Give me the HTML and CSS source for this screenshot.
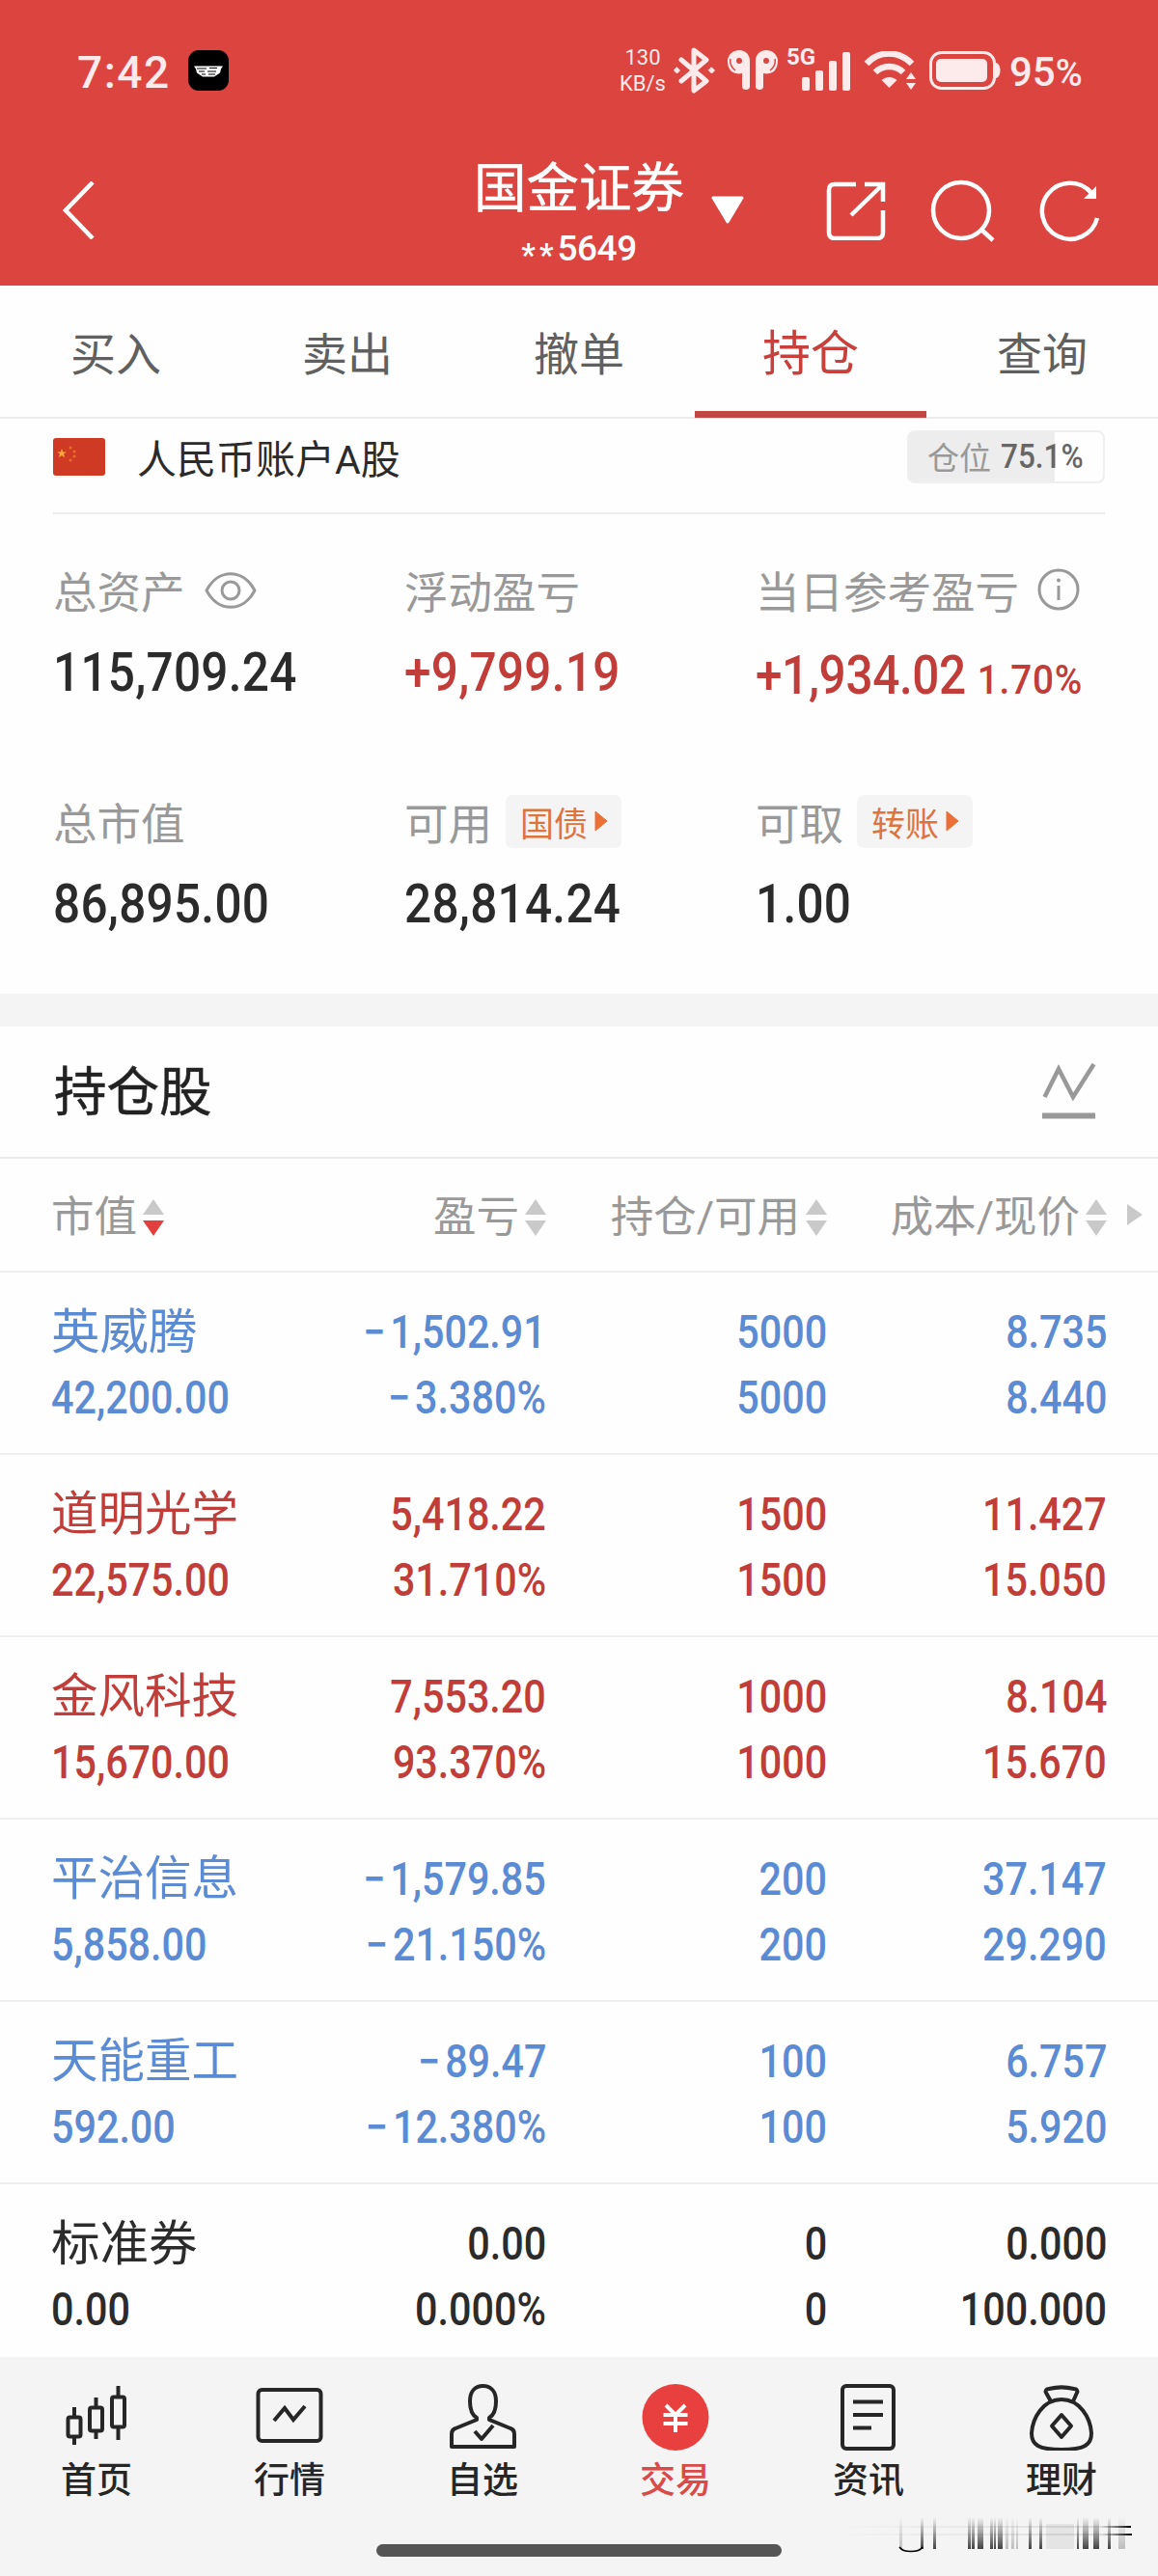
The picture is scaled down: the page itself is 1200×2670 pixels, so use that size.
FILE: index.html
```html
<!DOCTYPE html>
<html lang="zh-CN">
<head>
  <meta charset="UTF-8">
  <meta name="viewport" content="width=device-width, initial-scale=1.0">
  <title>国金证券 - 持仓</title>
  <link rel="stylesheet" href="styles.css">
</head>
<body>
  <header class="header">
    <div class="status-bar">
      <span class="time">7:42</span>
      <svg class="app-icon" width="42" height="42" viewBox="0 0 42 42">
        <rect width="42" height="42" rx="11" fill="#000"/>
        <path d="M6 16.500h30l-2 3-1 4-6 4h-12l-6-4-1-4z" fill="#fff"/>
        <path d="M9 19h10M22 18.500h8M11 22h6M20 22h9M14 25h4M21 25h7" stroke="#000" stroke-width="1.200"/>
      </svg>
      <div class="status-right">
        <div class="speed"><span>130</span><span>KB/s</span></div>
        <svg class="bluetooth" width="44" height="48" viewBox="0 0 44 48" fill="none" stroke="#fdeaea" stroke-width="5" stroke-linejoin="round" stroke-linecap="round">
          <path d="M8 13l26 22-13 10V3l13 10L8 35"/>
          <path d="M3.500 21l3 3-3 3-3-3zM39.500 21l3 3-3 3-3-3z" fill="#fdeaea" stroke-width="1"/>
        </svg>
        <svg class="buds" width="54" height="42" viewBox="0 0 54 42">
          <g fill="#fdeaea">
            <path d="M13 0c7 0 11 5 11 11v27c0 4-8 4-8 0V24c-4 1-8 0-11-2C1 18 1 13 1 10c1-6 6-10 12-10z"/>
            <path d="M41 0c-7 0-11 5-11 11v27c0 4 8 4 8 0V24c4 1 8 0 11-2 4-4 4-9 4-12-1-6-6-10-12-10z"/>
          </g>
          <g fill="none" stroke="#dc4440" stroke-width="1.500">
            <path d="M4 9c-1 5 1 9 5 12M50 9c1 5-1 9-5 12"/>
          </g>
          <circle cx="13" cy="11" r="3" fill="#dc4440"/>
          <circle cx="41" cy="11" r="3" fill="#dc4440"/>
        </svg>
        <div class="signal">
          <span class="net">5G</span>
          <svg width="66" height="44" viewBox="0 0 66 44" fill="#fdeaea">
            <rect x="16" y="29" width="8" height="14" rx="2"/>
            <rect x="30" y="22" width="8" height="21" rx="2"/>
            <rect x="44" y="12" width="8" height="31" rx="2"/>
            <rect x="58" y="3" width="8" height="40" rx="2"/>
          </svg>
        </div>
        <svg class="wifi" width="55" height="40" viewBox="0 0 55 40">
          <path d="M3 13C16-1 36-1 50 13M12 22c8-8 21-8 29 0" fill="none" stroke="#fdeaea" stroke-width="6.500"/>
          <path d="M26.500 38l-8-8c5-4 11-4 16 0z" fill="#fdeaea"/>
          <path d="M49 22l5 7H44zM49 40l5-7H44z" fill="#fdeaea"/>
        </svg>
        <svg class="battery" width="74" height="40" viewBox="0 0 74 40">
          <rect x="1.500" y="1.500" width="66" height="37" rx="11" fill="none" stroke="#fdeaea" stroke-width="3"/>
          <rect x="7" y="8" width="53" height="24" rx="5" fill="#fdeaea"/>
          <path d="M69 12c6 1 6 15 0 16z" fill="#fdeaea"/>
        </svg>
        <span class="percent">95<small>%</small></span>
      </div>
    </div>
    <div class="title-bar">
      <svg class="back" width="36" height="60" viewBox="0 0 36 60" fill="none" stroke="#fff" stroke-width="4.500">
        <path d="M32 1L4 30l28 29"/>
      </svg>
      <div class="account">
        <div class="broker">国金证券</div>
        <div class="account-no"><span class="mask">**</span>5649</div>
      </div>
      <svg class="drop" width="36" height="30" viewBox="0 0 36 30">
        <path d="M3 2h30L18 27z" fill="#fff" stroke="#fff" stroke-width="3" stroke-linejoin="round"/>
      </svg>
      <svg class="share" width="62" height="62" viewBox="0 0 62 62" fill="none" stroke="#fff" stroke-width="4.500">
        <path d="M31 4H9c-4 0-6 2-6 6v44c0 4 2 6 6 6h44c4 0 6-2 6-6V31M40 4h19v18M58 5L26 36"/>
      </svg>
      <svg class="search" width="68" height="66" viewBox="0 0 68 66" fill="none" stroke="#fff" stroke-width="4.500">
        <circle cx="32" cy="33" r="29"/>
        <path d="M53 53l12 11"/>
      </svg>
      <svg class="refresh" width="64" height="66" viewBox="0 0 64 66" fill="none" stroke="#fff" stroke-width="4.500">
        <path d="M60 41A29 29 0 1 1 54 15"/>
        <path d="M59 8v13H46z" fill="#fff" stroke="none"/>
      </svg>
    </div>
  </header>

  <nav class="tabs">
    <a class="tab">买入</a>
    <a class="tab">卖出</a>
    <a class="tab">撤单</a>
    <a class="tab active">持仓</a>
    <a class="tab">查询</a>
  </nav>

  <section class="summary">
    <div class="market">
      <svg class="flag" width="54" height="39" viewBox="0 0 54 39">
        <rect width="54" height="39" rx="3" fill="#cf3a24"/>
        <path d="M9 11l1.300 3.400h3.700l-3 2.200 1.100 3.600L9 18l-3.100 2.200L7 16.600l-3-2.200h3.700z" fill="#f6a93b"/>
        <g fill="#e8702c">
          <circle cx="18" cy="10" r="1.500"/>
          <circle cx="22" cy="14" r="1.500"/>
          <circle cx="22" cy="19" r="1.500"/>
          <circle cx="18" cy="23" r="1.500"/>
        </g>
      </svg>
      <span class="market-name">人民币账户A股</span>
      <div class="position"><span>仓位</span><b class="num">75.1%</b></div>
    </div>
    <div class="assets">
      <div class="asset">
        <div class="label">总资产
          <svg class="eye" width="54" height="38" viewBox="0 0 54 38" fill="none" stroke="#999" stroke-width="3">
            <path d="M2 19C14-4 40-4 52 19 40 42 14 42 2 19z" stroke-linejoin="round"/>
            <circle cx="27" cy="19" r="9"/>
          </svg>
        </div>
        <div class="value"><span class="num">115,709.24</span></div>
      </div>
      <div class="asset">
        <div class="label">浮动盈亏</div>
        <div class="value up"><span class="num">+9,799.19</span></div>
      </div>
      <div class="asset">
        <div class="label">当日参考盈亏
          <svg class="info" width="44" height="44" viewBox="0 0 44 44" fill="none" stroke="#999" stroke-width="3">
            <circle cx="22" cy="22" r="20"/>
            <path d="M22 18v15"/>
            <circle cx="22" cy="12.500" r="2" fill="#999" stroke="none"/>
          </svg>
        </div>
        <div class="value day up"><span class="num">+1,934.02 <small>1.70%</small></span></div>
      </div>
      <div class="asset">
        <div class="label">总市值</div>
        <div class="value"><span class="num">86,895.00</span></div>
      </div>
      <div class="asset">
        <div class="label">可用
          <span class="pill">国债<svg width="14" height="22" viewBox="0 0 14 22"><path d="M1 1l12 10L1 21z" fill="#ec6f35" stroke="#ec6f35" stroke-linejoin="round"/></svg></span>
        </div>
        <div class="value"><span class="num">28,814.24</span></div>
      </div>
      <div class="asset">
        <div class="label">可取
          <span class="pill">转账<svg width="14" height="22" viewBox="0 0 14 22"><path d="M1 1l12 10L1 21z" fill="#ec6f35" stroke="#ec6f35" stroke-linejoin="round"/></svg></span>
        </div>
        <div class="value"><span class="num">1.00</span></div>
      </div>
    </div>
  </section>

  <section class="holdings">
    <div class="holdings-title">
      <h2>持仓股</h2>
      <svg width="56" height="58" viewBox="0 0 56 58" fill="none" stroke="#999" stroke-width="4.500">
        <path d="M2.500 35L17 6l15 29L53.500 1"/>
        <path d="M0 54.500h55" stroke-width="6"/>
      </svg>
    </div>

    <div class="row head">
      <div>市值<i class="sort desc"></i></div>
      <div>盈亏<i class="sort"></i></div>
      <div>持仓/可用<i class="sort"></i></div>
      <div>成本/现价<i class="sort"></i></div>
      <i class="more"></i>
    </div>
    <div class="row down">
      <div><span class="name short">英威腾</span><span class="num">42,200.00</span></div>
      <div><span class="num"><i>−</i>1,502.91</span><span class="num"><i>−</i>3.380%</span></div>
      <div><span class="num">5000</span><span class="num">5000</span></div>
      <div><span class="num">8.735</span><span class="num">8.440</span></div>
    </div>
    <div class="row up">
      <div><span class="name">道明光学</span><span class="num">22,575.00</span></div>
      <div><span class="num">5,418.22</span><span class="num">31.710%</span></div>
      <div><span class="num">1500</span><span class="num">1500</span></div>
      <div><span class="num">11.427</span><span class="num">15.050</span></div>
    </div>
    <div class="row up">
      <div><span class="name">金风科技</span><span class="num">15,670.00</span></div>
      <div><span class="num">7,553.20</span><span class="num">93.370%</span></div>
      <div><span class="num">1000</span><span class="num">1000</span></div>
      <div><span class="num">8.104</span><span class="num">15.670</span></div>
    </div>
    <div class="row down">
      <div><span class="name">平治信息</span><span class="num">5,858.00</span></div>
      <div><span class="num"><i>−</i>1,579.85</span><span class="num"><i>−</i>21.150%</span></div>
      <div><span class="num">200</span><span class="num">200</span></div>
      <div><span class="num">37.147</span><span class="num">29.290</span></div>
    </div>
    <div class="row down">
      <div><span class="name">天能重工</span><span class="num">592.00</span></div>
      <div><span class="num"><i>−</i>89.47</span><span class="num"><i>−</i>12.380%</span></div>
      <div><span class="num">100</span><span class="num">100</span></div>
      <div><span class="num">6.757</span><span class="num">5.920</span></div>
    </div>
    <div class="row last">
      <div><span class="name short">标准券</span><span class="num">0.00</span></div>
      <div><span class="num">0.00</span><span class="num">0.000%</span></div>
      <div><span class="num">0</span><span class="num">0</span></div>
      <div><span class="num">0.000</span><span class="num">100.000</span></div>
    </div>
  </section>

  <footer class="bottom-nav">
    <div class="nav-items">
      <a class="nav-item">
        <svg width="70" height="72" viewBox="0 0 70 72" fill="none" stroke="#262626" stroke-width="4">
          <path d="M12 27v10M12 57v9M34.500 17v10M34.500 50v10M57.500 5v11M57.500 46v15"/>
          <rect x="5.500" y="37.500" width="13" height="20" rx="2"/>
          <rect x="28" y="27.500" width="13" height="24" rx="2"/>
          <rect x="51" y="16.500" width="13" height="31" rx="2"/>
        </svg>
        <span>首页</span>
      </a>
      <a class="nav-item">
        <svg width="70" height="72" viewBox="0 0 70 72" fill="none" stroke="#262626" stroke-width="4">
          <rect x="2.500" y="9" width="65" height="53" rx="4"/>
          <path d="M19 41l11-13 9 12 12-14"/>
        </svg>
        <span>行情</span>
      </a>
      <a class="nav-item">
        <svg width="70" height="72" viewBox="0 0 70 72" fill="none" stroke="#262626" stroke-width="4" stroke-linejoin="round">
          <path d="M29 38c-5-3-7-8-7-17C22 11 27 5 35.500 5S49 11 49 21c0 9-2 14-7 17v2l22 9c3 1 4 3 4 6v13H3V55c0-3 1-5 4-6l22-9z"/>
          <path d="M27 52l7 8 12-14"/>
        </svg>
        <span>自选</span>
      </a>
      <a class="nav-item current">
        <svg width="70" height="72" viewBox="0 0 70 72">
          <circle cx="35" cy="37.500" r="34.500" fill="#e8403f"/>
          <path d="M25 25l10 10 10-10M22.500 35h25M22.500 44h25M35 35v18" fill="none" stroke="#fff" stroke-width="4"/>
        </svg>
        <span>交易</span>
      </a>
      <a class="nav-item">
        <svg width="70" height="72" viewBox="0 0 70 72" fill="none" stroke="#262626" stroke-width="4">
          <rect x="8" y="5" width="53" height="65" rx="4"/>
          <path d="M19 21.500h31M19 35h31M19 48.500h19"/>
        </svg>
        <span>资讯</span>
      </a>
      <a class="nav-item">
        <svg width="70" height="72" viewBox="0 0 70 72" fill="none" stroke="#262626" stroke-width="4" stroke-linejoin="round">
          <path d="M24 21l-5-9c-1-2 0-4 3-4 8-2 18-2 26 0 3 0 4 2 3 4l-4 9"/>
          <path d="M35 19c19 0 30 19 31 35 0 12-7 17-31 17S4 66 4 54c1-16 12-35 31-35z"/>
          <path d="M35 35l10 11.500L35 58 25 46.500z"/>
        </svg>
        <span>理财</span>
      </a>
    </div>
    <div class="home-bar"></div>
    <svg class="stamp" width="320" height="44" viewBox="0 0 320 44">
      <defs>
        <linearGradient id="fade" x1="0" y1="0" x2="0" y2="1">
          <stop offset="0" stop-color="#222" stop-opacity="0"/>
          <stop offset=".5" stop-color="#222" stop-opacity=".4"/>
          <stop offset="1" stop-color="#222" stop-opacity=".85"/>
        </linearGradient>
        <linearGradient id="fadeLine" x1="0" y1="0" x2="1" y2="0">
          <stop offset="0" stop-color="#222" stop-opacity="0"/>
          <stop offset=".9" stop-color="#222" stop-opacity=".12"/>
          <stop offset="1" stop-color="#000"/>
        </linearGradient>
      </defs>
      <g fill="url(#fade)">
        <rect x="94" y="3" width="3" height="33"/>
        <rect x="107" y="3" width="3" height="33"/>
        <rect x="143" y="3" width="3" height="33"/>
        <rect x="147" y="3" width="3" height="33"/>
        <rect x="153" y="3" width="6" height="33"/>
        <rect x="166" y="3" width="3" height="33"/>
        <rect x="170" y="3" width="2" height="33"/>
        <rect x="174" y="3" width="5" height="33"/>
        <rect x="206" y="3" width="3" height="33"/>
        <rect x="217" y="3" width="3" height="33"/>
        <rect x="256" y="3" width="2" height="33"/>
        <rect x="262" y="3" width="6" height="33"/>
        <rect x="273" y="3" width="6" height="33"/>
        <rect x="288" y="3" width="3" height="33"/>
      </g>
      <g fill="url(#fade)" opacity=".3">
        <rect x="72" y="3" width="3" height="33"/>
        <rect x="182" y="3" width="3" height="33"/>
        <rect x="188" y="3" width="3" height="33"/>
        <rect x="193" y="3" width="2" height="33"/>
        <rect x="299" y="3" width="7" height="33"/>
      </g>
      <rect x="224" y="10" width="29" height="26" fill="#ddd" opacity=".7"/>
      <path d="M72 34c4 6 20 6 24 0" fill="none" stroke="#000" stroke-width="1.500"/>
      <rect x="4" y="12" width="308" height="2" fill="url(#fadeLine)"/>
      <rect x="4" y="20" width="309" height="2" fill="url(#fadeLine)"/>
    </svg>
  </footer>
</body>
</html>
```

FILE: styles.css
```css
* {
  box-sizing: border-box;
}

body {
  margin: 0;
  width: 1200px;
  height: 2670px;
  background-color: #fefefe;
  font-family: Roboto, "Noto Sans CJK SC", sans-serif;
  color: #2b2b2b;
  display: flex;
  flex-direction: column;
  overflow: hidden;
}

svg {
  display: block;
  flex: none;
}

/* narrow digits used for every amount */
.num {
  display: inline-block;
  font-family: Roboto, sans-serif;
  font-weight: 500;
  transform: scaleX(0.9);
  transform-origin: left center;
  white-space: nowrap;
}

.up {
  color: #c03d39;
}

.down {
  color: #5b8bd3;
}

/* header */
.header {
  height: 296px;
  background-color: #dc4440;
  color: #fff;
}

.status-bar {
  height: 146px;
  padding: 0 78px 0 80px;
  display: flex;
  align-items: center;
  color: #fdeaea;
}

.time {
  width: 115px;
  font-size: 46px;
  font-weight: 500;
  letter-spacing: 1.500px;
  padding-top: 3px;
}

.status-right {
  margin-left: auto;
  display: flex;
  align-items: center;
}

.speed {
  width: 48px;
  display: flex;
  flex-direction: column;
  align-items: center;
  font-size: 22px;
  line-height: 27px;
  margin-right: 8px;
}

.bluetooth {
  margin-right: 11px;
}

.buds {
  margin-right: 8px;
}

.signal {
  position: relative;
  width: 66px;
  margin-right: 14px;
}

.net {
  position: absolute;
  left: 0;
  top: -4px;
  font-size: 24px;
  line-height: 24px;
  font-weight: 700;
}

.wifi {
  margin-right: 13px;
}

.battery {
  margin-right: 9px;
}

.percent {
  width: 76px;
  font-size: 42px;
  font-weight: 500;
  padding-top: 2px;
  white-space: nowrap;
}

.percent small {
  font-size: 38px;
}

.title-bar {
  height: 150px;
  padding-left: 64px;
  display: flex;
  align-items: center;
  padding-bottom: 6px;
}

.account {
  width: 240px;
  margin-left: 380px;
  padding-top: 15px;
  text-align: center;
}

.broker {
  font-size: 54.500px;
  line-height: 64px;
  -webkit-text-stroke: 0.500px #fff;
}

.account-no {
  font-size: 37px;
  line-height: 62px;
  font-weight: 500;
  letter-spacing: -0.500px;
}

.mask {
  display: inline-block;
  line-height: 30px;
  vertical-align: -6px;
  font-size: 33px;
  letter-spacing: 4px;
}

.drop {
  margin-left: 16px;
}

.share {
  margin-left: 84px;
}

.search {
  margin-left: 46px;
}

.refresh {
  margin-left: 45px;
}

/* tabs */
.tabs {
  height: 138px;
  display: flex;
  border-bottom: 2px solid #ececec;
}

.tab {
  width: 240px;
  height: 137px;
  line-height: 143px;
  text-align: center;
  font-size: 47px;
  color: #606060;
}

.tab.active {
  font-size: 50px;
  color: #c8403c;
  border-bottom: 7px solid #c24744;
}

/* account summary */
.summary {
  height: 630px;
  border-bottom: 34px solid #f4f4f4;
  padding: 0 55px;
}

.market {
  height: 99px;
  padding-bottom: 19px;
  border-bottom: 2px solid #ececec;
  display: flex;
  align-items: center;
}

.market-name {
  margin-left: 33px;
  font-size: 41px;
}

.position {
  margin-left: auto;
  width: 205px;
  height: 55px;
  padding-left: 19px;
  border: 2px solid #efefef;
  border-radius: 8px;
  background: linear-gradient(to right, #ededed 75.1%, #fefefe 75.1%);
  display: flex;
  align-items: center;
  gap: 10px;
  font-size: 33px;
  color: #999;
}

.position .num {
  font-size: 35px;
  color: #666;
}

.assets {
  display: grid;
  grid-template-columns: 364px 364px 362px;
  grid-auto-rows: 240px;
  padding-top: 48px;
}

.label {
  height: 60px;
  display: flex;
  align-items: center;
  font-size: 45.500px;
  color: #999;
  white-space: nowrap;
}

.eye {
  margin: 2px 0 0 20px;
}

.info {
  margin-left: 19px;
}

.pill {
  height: 55px;
  margin-left: 14px;
  padding: 0 14px 0 15px;
  border-radius: 7px;
  background-color: #f4f4f4;
  color: #dd7440;
  font-size: 35px;
  display: flex;
  align-items: center;
  gap: 7px;
}

.value {
  padding-top: 24px;
  font-size: 55px;
  line-height: 64px;
}

.value .num {
  letter-spacing: 0.300px;
}

.value.day {
  padding-top: 27px;
}

.value.day .num {
  letter-spacing: -0.400px;
}

.value small {
  font-size: 43px;
  margin-left: 0;
  letter-spacing: 0.900px;
}

/* holdings */
.holdings {
  height: 1379px;
}

.holdings-title {
  height: 137px;
  padding: 0 64px 2px 56px;
  border-bottom: 2px solid #ececec;
  display: flex;
  align-items: center;
  justify-content: space-between;
}

.holdings-title h2 {
  margin: 0;
  padding-bottom: 6px;
  font-size: 54.500px;
  font-weight: 400;
  color: #222;
  -webkit-text-stroke: 0.500px #222;
}

.row {
  height: 189px;
  padding-left: 53px;
  border-bottom: 2px solid #efefef;
  display: grid;
  grid-template-columns: 280px 233px 291px 290px 1fr;
  font-size: 48px;
}

.row > div {
  display: flex;
  flex-direction: column;
  align-items: flex-end;
  padding-top: 28px;
  line-height: 68px;
}

.row > div:first-child {
  align-items: flex-start;
}

.row > div .num {
  transform: scaleX(0.86);
  transform-origin: right center;
}

.row > div:first-child .num {
  transform-origin: left center;
}

.num i {
  font-style: normal;
  margin-right: 6px;
}

.name {
  font-size: 48.500px;
}

.name.short {
  font-size: 50.500px;
}

.row.last {
  border-bottom: none;
}

.row.head {
  height: 118px;
  font-size: 44.500px;
  color: #999;
}

.row.head > div {
  flex-direction: row;
  align-items: center;
  justify-content: flex-end;
  padding: 5px 0 0;
  white-space: nowrap;
}

.row.head > div:first-child {
  justify-content: flex-start;
}

.sort {
  width: 22px;
  margin-left: 6px;
  display: flex;
  flex-direction: column;
  gap: 6px;
}

.sort::before,
.sort::after {
  content: "";
  border: 11px solid transparent;
}

.sort::before {
  border-top: none;
  border-bottom: 16px solid #c9c9c9;
}

.sort::after {
  border-bottom: none;
  border-top: 16px solid #c9c9c9;
}

.sort.desc::after {
  border-top-color: #e2403f;
}

.more {
  align-self: center;
  margin: 0 0 0 21px;
  width: 0;
  border: 11px solid transparent;
  border-left: 16px solid #c9c9c9;
  border-right: none;
}

/* bottom navigation */
.bottom-nav {
  position: relative;
  height: 227px;
  background-color: #f4f4f4;
}

.nav-items {
  display: flex;
  height: 194px;
  padding-top: 25px;
}

.nav-item {
  width: 200px;
  display: flex;
  flex-direction: column;
  align-items: center;
  font-size: 37px;
  font-weight: 500;
  line-height: 64px;
  color: #262626;
}

.nav-item.current {
  color: #d94a49;
}

.home-bar {
  width: 420px;
  height: 13px;
  margin: 0 auto;
  border-radius: 7px;
  background-color: #555;
}

.stamp {
  position: absolute;
  right: 20px;
  top: 163px;
}
```
